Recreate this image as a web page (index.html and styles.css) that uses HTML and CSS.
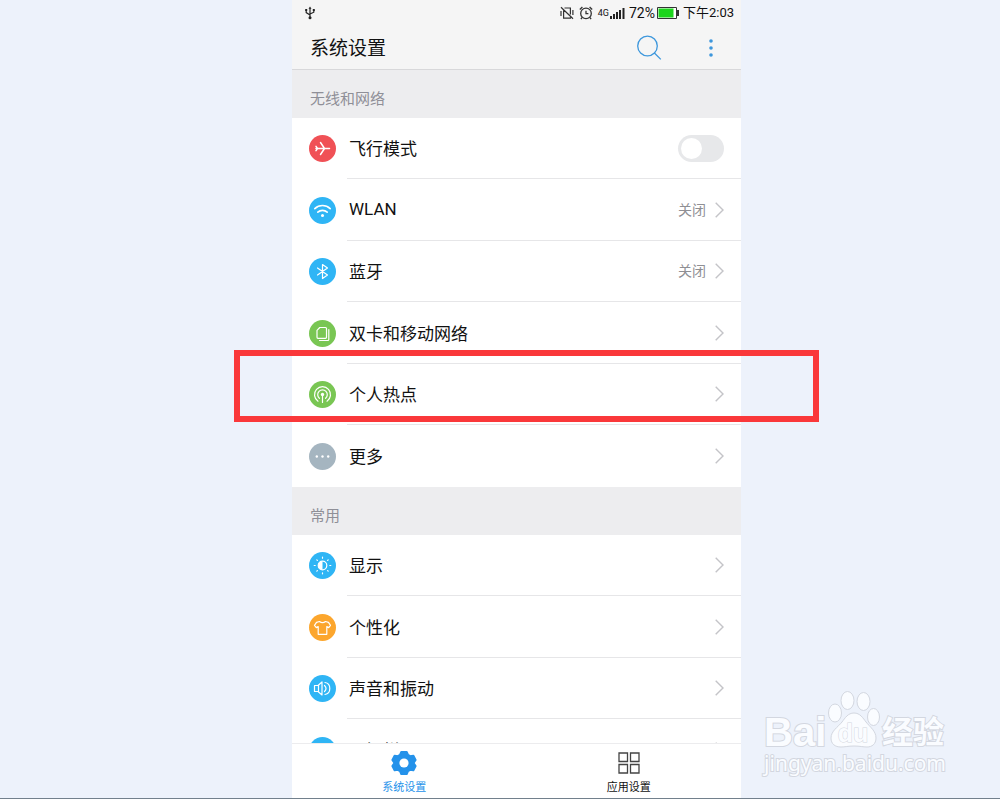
FILE: index.html
```
<!DOCTYPE html>
<html lang="zh-CN">
<head>
  <meta charset="UTF-8" />
  <meta name="viewport" content="width=device-width, initial-scale=1.0" />
  <title>系统设置</title>
  <link rel="stylesheet" href="styles.css">
</head>
<body>
  <div class="phone">
    <header>
      <!-- Status bar -->
      <div class="status">
        <svg class="usb" width="10" height="14" viewBox="0 0 10 14" fill="none" stroke="#222" stroke-width="1.2"><path d="M5 2v9M1.2 4v2.6L5 9M8.8 4v2.2L5 8"/><path d="M3.5 2.8L5 .5l1.5 2.3z" fill="#222" stroke="none"/><circle cx="5" cy="11.8" r="1.5" fill="#222" stroke="none"/><path d="M.2 3h2v2h-2zM7.8 3h2v2h-2z" fill="#222" stroke="none"/></svg>
        <div class="status-right">
          <svg width="14" height="14" viewBox="0 0 14 14" fill="none" stroke="#333" stroke-width="1.2"><path d="M3.6 4.5v7.7h6.8v-1M10.4 8.5V2H4.5M1 1.2l12 11.6M1 5v5M12.9 4v5"/></svg>
          <svg class="alarm" width="14" height="14" viewBox="0 0 14 14" fill="none" stroke="#333" stroke-width="1.3"><circle cx="7" cy="7.4" r="5.3"/><path d="M7 4.8v2.8h2.4M.8 3.4L3.4 1M13.2 3.4L10.6 1M3.2 11.4l-1.3 1.8M10.8 11.4l1.3 1.8"/></svg>
          <span class="net">4G</span>
          <svg width="15" height="12" viewBox="0 0 15 12" fill="#222"><path d="M0 9h2v3H0zM3 7h2v5H3zM6 5h2v7H6zM9 3h2v9H9zM12.5 1h2v11h-2z"/></svg>
          <span class="percent">72%</span>
          <svg class="battery" width="22" height="12" viewBox="0 0 22 12"><path d="M.5.5h19v11H.5z" fill="#fff" stroke="#333"/><path d="M20 3h2v6h-2z" fill="#333"/><path d="M1.5 1.5h15v9h-15z" fill="#1cd51c"/></svg>
          <span class="time">下午2:03</span>
        </div>
      </div>
      <div class="title-bar">
        <h1>系统设置</h1>
        <button class="search" aria-label="搜索"><svg width="26" height="26" viewBox="0 0 26 26" fill="none" stroke="#3d97dc" stroke-width="1.3"><circle cx="11.5" cy="11" r="9.8"/><path d="M18.4 18l6.4 6.4"/></svg></button>
        <button aria-label="更多选项"><svg width="4" height="18" viewBox="0 0 4 18" fill="#3d97dc"><circle cx="2" cy="2" r="1.8"/><circle cx="2" cy="9" r="1.8"/><circle cx="2" cy="16" r="1.8"/></svg></button>
      </div>
    </header>

    <main>
      <h2>无线和网络</h2>
      <ul>
        <li>
          <div class="row">
            <svg class="icon red" viewBox="0 0 27 27"><path d="M7 13.5h13.5M15.5 13.5L11.5 7.5M15.5 13.5l-4 6M8.5 13.5L7 11.3M8.5 13.5L7 15.7" stroke-width="1.5"/></svg>
            <div class="row-body">
              <label for="airplane">飞行模式</label>
              <input type="checkbox" id="airplane" class="switch">
            </div>
          </div>
        </li>
        <li>
          <a href="#" class="row">
            <svg class="icon blue" viewBox="0 0 27 27"><path d="M5.8 11.6a11.2 11.2 0 0 1 15.4 0M8.8 15.2a7 7 0 0 1 9.4 0" stroke-width="1.6"/><circle cx="13.5" cy="18.5" r="1.5" class="solid"/></svg>
            <span class="row-body"><span>WLAN</span><span class="value">关闭</span><svg class="arrow" viewBox="0 0 9 16"><path d="M.7.7L8 8 .7 15.3"/></svg></span>
          </a>
        </li>
        <li>
          <a href="#" class="row">
            <svg class="icon blue" viewBox="0 0 27 27"><path d="M8.5 10l10 7-5 3.5v-14l5 3.5-10 7"/></svg>
            <span class="row-body"><span>蓝牙</span><span class="value">关闭</span><svg class="arrow" viewBox="0 0 9 16"><path d="M.7.7L8 8 .7 15.3"/></svg></span>
          </a>
        </li>
        <li>
          <a href="#" class="row">
            <svg class="icon green" viewBox="0 0 27 27"><path d="M10.8 7.5h5.7q1 0 1 1v8.8q0 1-1 1H9q-1 0-1-1v-7zM19.8 9.5v10q0 1-1 1h-8.3"/></svg>
            <span class="row-body"><span>双卡和移动网络</span><svg class="arrow" viewBox="0 0 9 16"><path d="M.7.7L8 8 .7 15.3"/></svg></span>
          </a>
        </li>
        <li>
          <a href="#" class="row">
            <svg class="icon green" viewBox="0 0 27 27"><path d="M13.5 14v7.5M9 20.2a8 8 0 1 1 9 0M10.4 17.3a4.8 4.8 0 1 1 6.2 0"/><circle cx="13.5" cy="13.5" r="1.7" class="solid"/></svg>
            <span class="row-body"><span>个人热点</span><svg class="arrow" viewBox="0 0 9 16"><path d="M.7.7L8 8 .7 15.3"/></svg></span>
          </a>
        </li>
        <li>
          <a href="#" class="row">
            <svg class="icon gray" viewBox="0 0 27 27"><g class="solid"><circle cx="7.8" cy="13.5" r="1.2"/><circle cx="13.5" cy="13.5" r="1.2"/><circle cx="19.2" cy="13.5" r="1.2"/></g></svg>
            <span class="row-body"><span>更多</span><svg class="arrow" viewBox="0 0 9 16"><path d="M.7.7L8 8 .7 15.3"/></svg></span>
          </a>
        </li>
      </ul>

      <h2>常用</h2>
      <ul>
        <li>
          <a href="#" class="row">
            <svg class="icon blue" viewBox="0 0 27 27"><circle cx="13.5" cy="13.5" r="4.3"/><path d="M13.5 9.2a4.3 4.3 0 0 0 0 8.6z" class="solid"/><path d="M13.5 5.2v1M13.5 20.8v1M5.2 13.5h1M20.8 13.5h1M7.8 7.8l.6.6M18.6 18.6l.6.6M7.8 19.2l.6-.6M18.6 8.4l.6-.6"/></svg>
            <span class="row-body"><span>显示</span><svg class="arrow" viewBox="0 0 9 16"><path d="M.7.7L8 8 .7 15.3"/></svg></span>
          </a>
        </li>
        <li>
          <a href="#" class="row">
            <svg class="icon orange" viewBox="0 0 27 27"><path d="M10.5 7.5q3 2.4 6 0l3 .8 2 3-1.8 2.3-1.9-1v7.7H9.2v-7.7l-1.9 1-1.8-2.3 2-3z"/></svg>
            <span class="row-body"><span>个性化</span><svg class="arrow" viewBox="0 0 9 16"><path d="M.7.7L8 8 .7 15.3"/></svg></span>
          </a>
        </li>
        <li>
          <a href="#" class="row">
            <svg class="icon blue" viewBox="0 0 27 27"><path d="M5.5 10.5H9l4-3.5v13l-4-3.5H5.5zM9.5 10.5v6M15.5 10.5q3 3 0 6M16 7.5q4.8.8 4.8 6t-4.8 6"/></svg>
            <span class="row-body"><span>声音和振动</span><svg class="arrow" viewBox="0 0 9 16"><path d="M.7.7L8 8 .7 15.3"/></svg></span>
          </a>
        </li>
        <li>
          <a href="#" class="row">
            <svg class="icon blue" viewBox="0 0 27 27"><path d="M8 9h11v9H8z"/></svg>
            <span class="row-body"><span>通知栏</span><svg class="arrow" viewBox="0 0 9 16"><path d="M.7.7L8 8 .7 15.3"/></svg></span>
          </a>
        </li>
      </ul>
    </main>

    <nav>
      <a href="#" class="active">
        <svg width="26" height="26" viewBox="0 0 26 26"><path fill="#2492ea" stroke="#2492ea" stroke-width="2" stroke-linejoin="round" d="M10.3 2h5.4l1.3 3 2.2 1.2 3.2-.4 2.2 4.2-1.7 2.5v1L24.6 16l-2.2 4.2-3.2-.4L17 21l-1.3 3h-5.4L9 21l-2.2-1.2-3.2.4L1.4 16l1.7-2.5v-1L1.4 10l2.2-4.2 3.2.4L9 5z"/><circle cx="13" cy="13" r="4.6" fill="#fff"/></svg>
        <span>系统设置</span>
      </a>
      <a href="#">
        <svg width="26" height="26" viewBox="0 0 26 26" fill="none" stroke="#444" stroke-width="1.3"><path d="M3 3h8.5v8.5H3zM14.5 3H23v8.500h-8.5zM3 14.500h8.5V23H3zM14.5 14.500H23V23h-8.5z"/></svg>
        <span>应用设置</span>
      </a>
    </nav>

    <!-- Highlight around the hotspot row -->
    <div class="highlight"></div>
  </div>

  <!-- Watermark -->
  <div class="watermark">
    <div class="brand">
      <span class="bai">Bai</span>
      <svg width="54" height="58" viewBox="0 0 54 58" fill="#fafcff" stroke="#d3d7e0"><ellipse cx="8" cy="23" rx="6.5" ry="9"/><ellipse cx="20.5" cy="10.5" rx="6.5" ry="9"/><ellipse cx="36.5" cy="11.5" rx="6.5" ry="9"/><ellipse cx="46.5" cy="27" rx="6" ry="8.5"/><path d="M27 23c6 0 9 5 12 9 4 5 10 9 10 16 0 6-4 9-9 9-4 0-7-1-13-1s-9 1-13 1c-6 0-10-3-10-9 0-7 7-11 11-16 3-4 6-9 12-9z"/><text x="26" y="52" text-anchor="middle" class="du">du</text></svg>
      <span class="exp">经验</span>
    </div>
    <div class="url">jingyan.baidu.com</div>
  </div>
</body>
</html>
```
FILE: styles.css
```
* { box-sizing: border-box; }
body {
  font-family: Roboto, "Noto Sans CJK SC", sans-serif;
  margin: 0;
  height: 100vh;
  overflow: hidden;
  position: relative;
  display: grid;
  grid-template-columns: 292fr 449fr 259fr;
  grid-template-rows: minmax(0, 1fr);
  background: #edf2fb;
  border-bottom: 1px solid #72808c;
  color: #111;
}
a { color: inherit; text-decoration: none; }
button { background: none; border: none; padding: 0; cursor: pointer; display: flex; }

.phone { grid-column: 2; position: relative; display: flex; flex-direction: column; background: #fff; }

/* Header */
header { background: #f5f5f5; border-bottom: 1px solid #d8d8da; }
.status { display: flex; justify-content: space-between; align-items: center; height: 26px; padding: 0 7px 0 13px; }
.status-right { display: flex; align-items: center; }
.alarm { margin-left: 5px; }
.net { font-size: 9px; margin: 0 1px 0 5px; }
.percent { font-size: 14px; margin: 0 2px 0 4px; }
.battery { margin-right: 4px; }
.time { font-size: 13px; line-height: 16px; }
.title-bar { display: flex; align-items: center; height: 43px; padding: 0 28px 0 18px; }
.title-bar h1 { margin: 0; padding-top: 3px; font-size: 19px; line-height: 26px; font-weight: 400; flex: 1; }
.search { margin-right: 47px; }

/* List */
main { flex: 1; min-height: 0; overflow-x: visible; overflow-y: clip; }
h2 { margin: 0; padding: 9px 18px 0; height: 48px; background: #ededef; color: #8f8f97; font-size: 15px; line-height: 40px; font-weight: 400; }
ul { list-style: none; margin: 0; padding: 0; display: grid; grid-auto-rows: 61px 62px; }
.row { display: flex; align-items: center; height: 100%; padding-left: 17px; gap: 11px; }
.row-body { flex: 1; height: 100%; display: flex; align-items: center; padding: 0 17px 0 2px; border-bottom: 1px solid #e6e6e8; font-size: 17px; }
li:last-child .row-body { border-bottom: none; }
.row-body > :first-child { flex: 1; padding-bottom: 1px; }
.value { color: #8f8f94; font-size: 14px; margin-right: 9px; padding-bottom: 2px; }
.arrow { width: 9px; height: 16px; fill: none; stroke: #c4c4c8; stroke-width: 1.4; }

.icon { width: 27px; height: 27px; border-radius: 50%; fill: none; stroke: #fff; stroke-width: 1.2; stroke-linecap: round; stroke-linejoin: round; }
.icon .solid { fill: #fff; stroke: none; }
.red { background: #f05156; }
.blue { background: #2fb5f5; }
.green { background: #79c653; }
.gray { background: #a5b5c0; }
.orange { background: #fca62d; }

.switch { appearance: none; margin: 0; width: 46px; height: 27px; border-radius: 14px; background: #e7e8ea; padding: 3px; cursor: pointer; }
.switch::before { content: ""; display: block; width: 21px; height: 21px; border-radius: 50%; background: #fff; }
.switch:checked { background: #2fb5f5; }
.switch:checked::before { margin-left: auto; }

/* Bottom tabs */
nav { display: flex; height: 55px; border-top: 1px solid #ececee; background: #fff; }
nav a { flex: 1; display: flex; flex-direction: column; align-items: center; gap: 2px; padding-top: 6px; font-size: 11px; line-height: 20px; }
nav svg { flex: none; }
nav .active { color: #2492ea; }

.highlight { position: absolute; top: 350px; left: -58px; right: -78px; height: 72px; border: 6px solid #fa383a; pointer-events: none; }

/* Watermark */
.watermark { position: absolute; right: 54px; bottom: 20px; color: #fafcff; pointer-events: none; }
.brand { display: flex; align-items: flex-end; justify-content: space-between; padding-right: 2px; }
.bai, .exp, .du, .url { paint-order: stroke; -webkit-text-stroke: 2px #d3d7e0; }
.bai { font: 700 40px/32px "Liberation Sans", sans-serif; }
.exp { font: 700 31px/37px "Noto Sans CJK SC", sans-serif; }
.du { font: 700 25px "Liberation Sans", sans-serif; }
.url { font: 400 21px/30px "Noto Sans", sans-serif; }
```
